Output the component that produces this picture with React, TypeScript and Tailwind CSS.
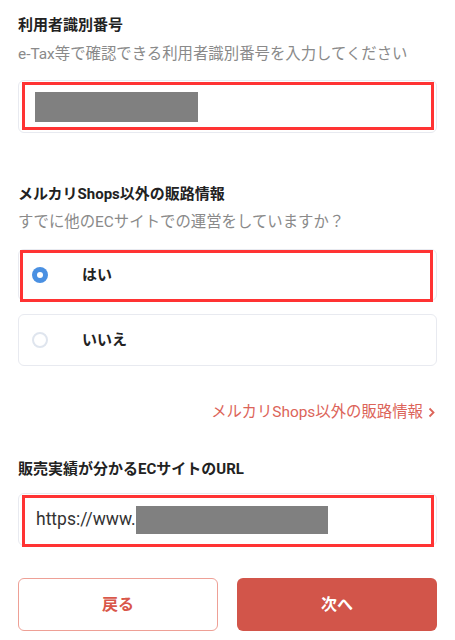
export default function App() {
  return (
    <main className="min-h-[640px] w-[455px] bg-white px-[18px] pt-[14px] font-['Roboto','Noto_Sans_CJK_JP',sans-serif] text-[#222]">
      {/* 利用者識別番号 */}
      <h2 className="text-[15px] font-bold leading-[22px]">利用者識別番号</h2>
      <p className="mt-[7px] text-[15.4px] leading-[22px] text-[#8a8a8a]">
        e-Tax等で確認できる利用者識別番号を入力してください
      </p>
      <div className="relative mt-[15px] flex h-[53px] items-center rounded-[6px] border border-[#e8eaf0] px-[16px]">
        <div className="h-[30px] w-[163px] bg-[#808080]" />
        <div className="pointer-events-none absolute top-[1px] right-[2px] bottom-[2px] left-[3px] border-[3px] border-[#ff3333]" />
      </div>

      {/* 販路情報 */}
      <h2 className="mt-[50px] text-[15px] font-bold leading-[22px]">メルカリShops以外の販路情報</h2>
      <p className="mt-[6px] text-[15.4px] leading-[22px] text-[#8a8a8a]">
        すでに他のECサイトでの運営をしていますか？
      </p>
      <div className="mt-[16px] flex flex-col gap-[13px]">
        <div className="relative flex h-[52px] items-center rounded-[6px] border border-[#e8eaf0] pl-[13px]">
          <span className="flex h-[16px] w-[16px] items-center justify-center rounded-full bg-[#4a90e2]">
            <span className="h-[6px] w-[6px] rounded-full bg-white" />
          </span>
          <span className="ml-[34px] text-[15px] font-bold">はい</span>
          <div className="pointer-events-none absolute top-0 right-[3px] bottom-[-2px] left-[1px] border-[3px] border-[#ff3333]" />
        </div>
        <div className="flex h-[52px] items-center rounded-[6px] border border-[#e8eaf0] pl-[13px]">
          <span className="h-[16px] w-[16px] rounded-full border-2 border-[#dfe5ee]" />
          <span className="ml-[34px] text-[15px] font-bold">いいえ</span>
        </div>
      </div>

      <div className="mt-[35px] flex items-center justify-end gap-[5px] pr-[2px] text-[15.4px] leading-[22px] text-[#dc6459]">
        <span>メルカリShops以外の販路情報</span>
        <svg width="7" height="11" viewBox="0 0 7 11" fill="none">
          <path d="M1.5 1.5 5.5 5.5 1.5 9.5" stroke="#dc6459" strokeWidth="1.8" />
        </svg>
      </div>

      {/* URL */}
      <h2 className="mt-[35px] text-[15px] font-bold leading-[22px]">販売実績が分かるECサイトのURL</h2>
      <div className="relative mt-[13px] flex h-[53px] items-center rounded-[6px] border border-[#e8eaf0] pl-[17px]">
        <span className="text-[17.5px] text-[#333]">https://www.</span>
        <span className="h-[28px] w-[192px] bg-[#808080]" />
        <div className="pointer-events-none absolute top-[1px] right-[2px] bottom-[-2px] left-[3px] border-[3px] border-[#ff3333]" />
      </div>

      {/* buttons */}
      <div className="mt-[32px] grid grid-cols-2 gap-[19px]">
        <button className="flex h-[53px] items-center justify-center rounded-[6px] border-[1.5px] border-[#eea096] bg-white text-[16px] font-bold text-[#d9574a]">
          戻る
        </button>
        <button className="flex h-[53px] items-center justify-center rounded-[6px] bg-[#d2554a] text-[16px] font-bold text-white">
          次へ
        </button>
      </div>
    </main>
  );
}
